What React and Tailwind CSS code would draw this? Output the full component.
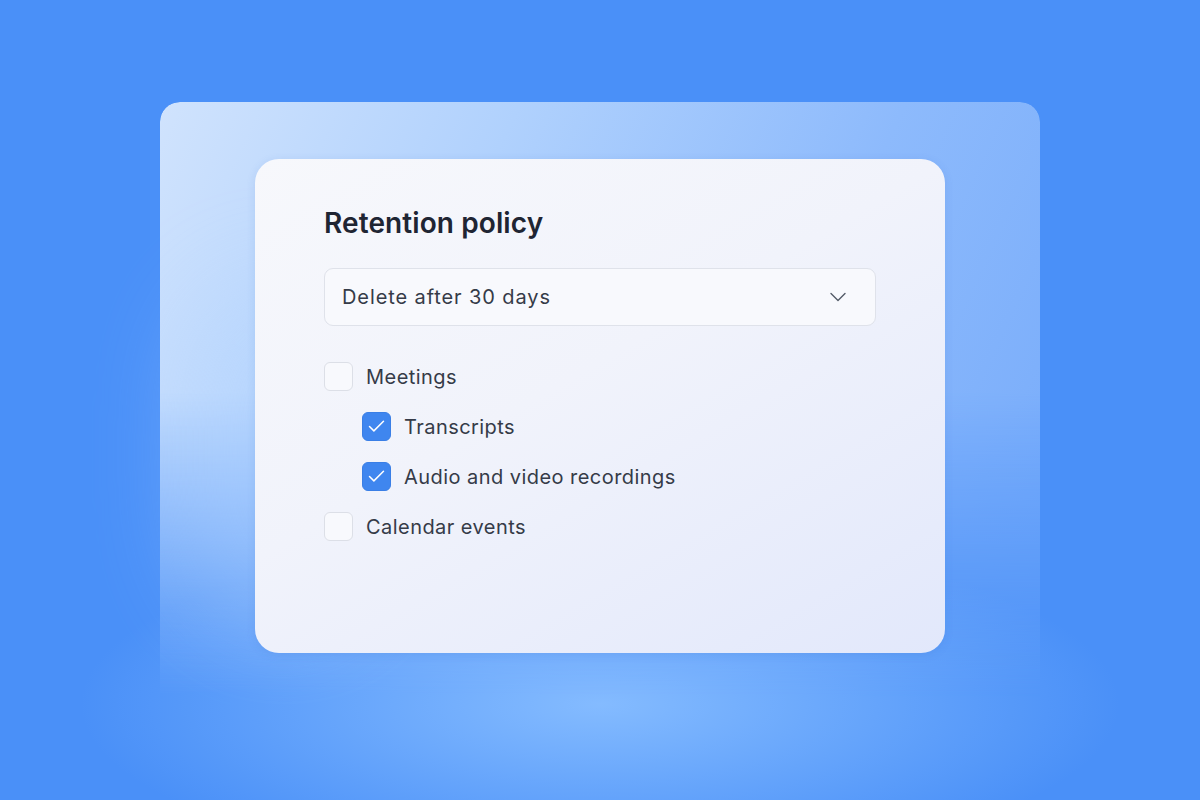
import React from 'react';
import { ChevronDown, Check } from 'lucide-react';

const items = [
  { label: 'Meetings', checked: false, nested: false },
  { label: 'Transcripts', checked: true, nested: true },
  { label: 'Audio and video recordings', checked: true, nested: true },
  { label: 'Calendar events', checked: false, nested: false },
];

const Checkbox = ({ checked }) => (
  <span
    className={
      checked
        ? 'flex h-[29px] w-[29px] shrink-0 items-center justify-center rounded-[6px] bg-[#3f86ef] border border-[#3a7fe6]'
        : 'flex h-[29px] w-[29px] shrink-0 items-center justify-center rounded-[6px] bg-[#f8f9fd] border-[1.5px] border-[#dcdfe7]'
    }
  >
    {checked && <Check size={21} strokeWidth={1.7} className="text-white" />}
  </span>
);

export default function App() {
  return (
    <div
      className="relative h-[800px] w-full overflow-hidden bg-[#4a90f8] bg-[radial-gradient(ellipse_520px_170px_at_50%_88%,#84bbff_0%,rgba(74,144,248,0)_100%)]"
      style={{ fontFamily: 'Inter, "Noto Sans", sans-serif' }}
    >
      <div className="relative mx-auto mt-[102px] w-[880px] pt-[57px] pb-[140px]">
        {/* Frosted backdrop that fades toward the bottom */}
        <div className="absolute inset-0 rounded-[20px] bg-[linear-gradient(115deg,#d0e3fd_0%,#b0d1fd_30%,#8dbafc_62%,#72a8fa_100%)] [mask-image:linear-gradient(to_bottom,black_0%,black_42%,transparent_86%)]" />
        <div className="absolute left-[30px] top-[180px] h-[340px] w-[190px] rounded-full bg-[#b3d4ff] opacity-40 blur-[50px]" />

        {/* Card */}
        <div className="relative mx-[95px] h-[494px] rounded-[24px] bg-[linear-gradient(150deg,#f7f8fc_0%,#f1f3fb_45%,#e2e8fb_100%)] px-[69px] pt-[47px] shadow-[0_2px_10px_rgba(40,90,180,0.12)]">
          <h1 className="text-[28px] font-semibold leading-[34px] tracking-[0.1px] text-[#1f2533]">
            Retention policy
          </h1>

          <div className="mt-[28px] flex h-[58px] items-center justify-between rounded-[9px] border-[1.5px] border-[#dfe2ea] bg-[#f8f9fd] pl-[17px] pr-[23px]">
            <span className="text-[20px] tracking-[0.9px] text-[#353b48]">Delete after 30 days</span>
            <ChevronDown size={28} strokeWidth={1.2} className="text-[#535a67]" />
          </div>

          <div className="mt-[36px] flex flex-col gap-[21px]">
            {items.map((item) => (
              <label
                key={item.label}
                className={`flex h-[29px] items-center gap-[13px] ${item.nested ? 'pl-[38px]' : ''}`}
              >
                <Checkbox checked={item.checked} />
                <span className="text-[20px] tracking-[0.45px] text-[#353b48]">{item.label}</span>
              </label>
            ))}
          </div>
        </div>
      </div>
    </div>
  );
}
